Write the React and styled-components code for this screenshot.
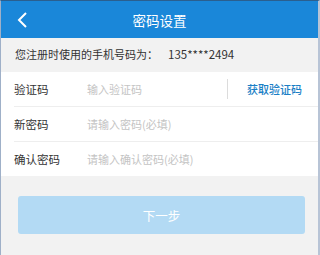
import React from "react";
import styled, { createGlobalStyle } from "styled-components";

const GlobalStyle = createGlobalStyle`
  html, body {
    margin: 0;
    padding: 0;
    background: #f2f2f2;
    font-family: "Noto Sans CJK SC", "Liberation Sans", sans-serif;
  }
`;

const Frame = styled.div`
  width: 320px;
  height: 255px;
  box-sizing: border-box;
  border-left: 1px solid #9fb0c8;
  border-right: 2px solid #b8c4d6;
  border-top: 1px solid #2a5f8f;
  background: #f2f2f2;
  overflow: hidden;
`;

const Header = styled.div`
  height: 37px;
  background: #1a87d9;
  display: flex;
  align-items: center;
  justify-content: center;
  position: relative;
  color: #fff;
  font-size: 13.5px;
`;

const Back = styled.div`
  position: absolute;
  left: 14px;
  top: 10px;
  width: 16px;
  height: 18px;
`;

const Info = styled.div`
  height: 32px;
  display: flex;
  align-items: center;
  padding-left: 14px;
  font-size: 11px;
  color: #333;
  white-space: pre;
`;

const Phone = styled.span`
  margin-left: 10px;
  font-size: 11.5px;
`;

const Form = styled.div`
  background: #fff;
  margin-top: 2px;
`;

const Row = styled.div`
  height: 34px;
  margin-left: 13px;
  display: flex;
  align-items: center;
  border-bottom: ${(p) => (p.last ? "none" : "1px solid #eeeeee")};
`;

const Label = styled.div`
  width: 73px;
  font-size: 11.5px;
  color: #333;
`;

const Placeholder = styled.div`
  flex: 1;
  font-size: 11px;
  color: #c4c4c4;
`;

const Divider = styled.div`
  width: 1px;
  height: 20px;
  background: #dcdcdc;
  margin-right: 19px;
`;

const CodeLink = styled.div`
  font-size: 11px;
  color: #1b7fc6;
  font-weight: 500;
  margin-right: 16px;
`;

const Button = styled.div`
  margin: 20px 13px 0 17px;
  height: 38px;
  border-radius: 3px;
  background: #b3daf4;
  color: #fff;
  font-size: 12.5px;
  display: flex;
  align-items: center;
  justify-content: center;
`;

export default function App() {
  return (
    <>
      <GlobalStyle />
      <Frame>
        <Header>
          <Back>
            <svg width="16" height="18" viewBox="0 0 16 18">
              <path d="M11 2 L4 9 L11 16" fill="none" stroke="#fff" strokeWidth="2" />
            </svg>
          </Back>
          密码设置
        </Header>
        <Info>
          您注册时使用的手机号码为：<Phone>135****2494</Phone>
        </Info>
        <Form>
          <Row>
            <Label>验证码</Label>
            <Placeholder>输入验证码</Placeholder>
            <Divider />
            <CodeLink>获取验证码</CodeLink>
          </Row>
          <Row>
            <Label>新密码</Label>
            <Placeholder>请输入密码(必填)</Placeholder>
          </Row>
          <Row last>
            <Label>确认密码</Label>
            <Placeholder>请输入确认密码(必填)</Placeholder>
          </Row>
        </Form>
        <Button>下一步</Button>
      </Frame>
    </>
  );
}
